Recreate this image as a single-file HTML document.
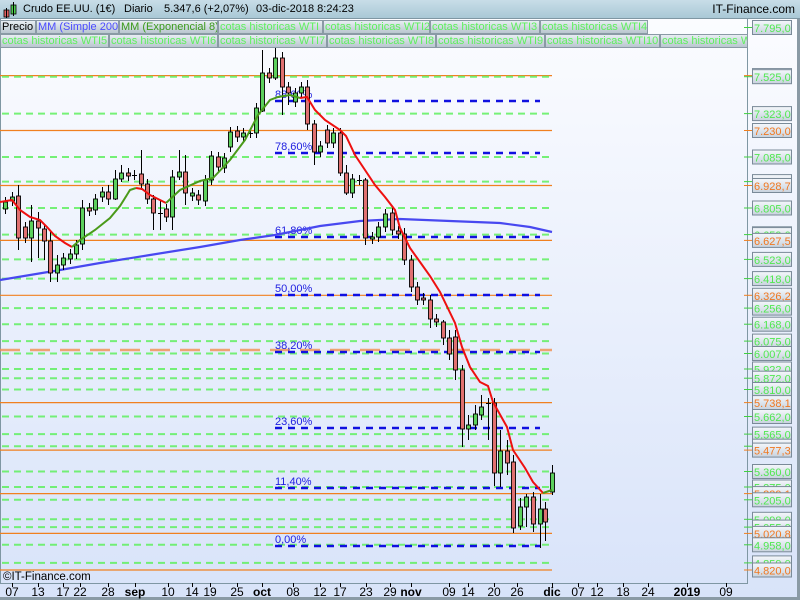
<!DOCTYPE html>
<html><head><meta charset="utf-8"><style>
*{margin:0;padding:0;box-sizing:border-box}
body{width:800px;height:600px;overflow:hidden;background:#dfe8f8;font-family:"Liberation Sans",sans-serif;position:relative}
#top{position:absolute;left:0;top:0;width:800px;height:19px;background:linear-gradient(#c8dde8,#a9c8d6);border-bottom:1px solid #7f97a3;font-size:11px;line-height:19px}
.lg{position:absolute;height:14px;font-size:11px;line-height:13px;border:1px solid #8a9aa5;background:linear-gradient(#e8eef2,#b9c6cf);color:#5ef05e;white-space:nowrap;overflow:hidden;padding:0 1px}
svg{position:absolute;left:0;top:0}
</style></head><body>
<div id="top">
<svg width="16" height="19" style="left:2px;top:0"><rect x="2" y="10" width="5" height="7" fill="#e06060" stroke="#000" stroke-width="0.8"/><line x1="4.5" y1="8" x2="4.5" y2="18" stroke="#000"/><rect x="9" y="5" width="5" height="9" fill="#50d050" stroke="#000" stroke-width="0.8"/><line x1="11.5" y1="2" x2="11.5" y2="16" stroke="#000"/></svg>
<span style="position:absolute;left:23px;top:0">Crudo EE.UU. (1€)</span>
<span style="position:absolute;left:124px;top:0">Diario</span>
<span style="position:absolute;left:164px;top:0">5.347,6 (+2,07%)</span>
<span style="position:absolute;left:256px;top:0">03-dic-2018 8:24:23</span>
<span style="position:absolute;right:5px;top:0;font-size:12px">IT-Finance.com</span>
</div>
<div class="lg" style="left:0;top:20px;width:36px;color:#000">Precio</div>
<div class="lg" style="left:36px;top:20px;width:83px;color:#4a4aff">MM (Simple 200)</div>
<div class="lg" style="left:119px;top:20px;width:99px;color:#3a9a1a">MM (Exponencial 8)</div>
<div class="lg" style="left:218px;top:20px;width:105px">cotas historicas WTI</div>
<div class="lg" style="left:323px;top:20px;width:107px">cotas historicas WTI2</div>
<div class="lg" style="left:430px;top:20px;width:110px">cotas historicas WTI3</div>
<div class="lg" style="left:540px;top:20px;width:108px">cotas historicas WTI4</div>
<div class="lg" style="left:0;top:34px;width:109px">cotas historicas WTI5</div>
<div class="lg" style="left:109px;top:34px;width:109px">cotas historicas WTI6</div>
<div class="lg" style="left:218px;top:34px;width:109px">cotas historicas WTI7</div>
<div class="lg" style="left:327px;top:34px;width:109px">cotas historicas WTI8</div>
<div class="lg" style="left:436px;top:34px;width:109px">cotas historicas WTI9</div>
<div class="lg" style="left:545px;top:34px;width:115px">cotas historicas WTI10</div>
<div class="lg" style="left:660px;top:34px;width:88px">cotas historicas WTI11</div>
<svg id="c" width="800" height="600" style="z-index:-1"></svg>
<script>
var s='';
s+='<defs><linearGradient id="bg" x1="0" y1="0" x2="0" y2="1"><stop offset="0" stop-color="#fbfcff"/><stop offset="1" stop-color="#d8e3f9"/></linearGradient><linearGradient id="lb" x1="0" y1="0" x2="0" y2="1"><stop offset="0" stop-color="#f4f7fb"/><stop offset="1" stop-color="#c8d2de"/></linearGradient></defs>';
s+='<rect x="0" y="19" width="800" height="581" fill="url(#bg)"/>';
s+='<line x1="0.5" y1="19" x2="0.5" y2="583" stroke="#7f97a3"/>';
s+='<line x1="747.5" y1="19" x2="747.5" y2="583" stroke="#7f97a3"/>';
s+='<line x1="0" y1="583.5" x2="748" y2="583.5" stroke="#7f97a3"/>';
s+='<rect x="797" y="19" width="3" height="581" fill="#8a9aa5"/><rect x="0" y="597" width="800" height="3" fill="#8a9aa5"/>';
function Y(p){return 27.5+(7795-p)*0.18235;}
var G=[7795,7525,7323,7085,6950,6805,6659,6523,6418,6256,6168,6075,6007,5922,5872,5810,5662,5565,5499,5360,5275,5205,5098,5055,4958,4859];
var O=[7531.2,7230,6928.7,6627.5,6326.2,6007,5738.1,5477.3,5239.1,5020.8,4820];
O.forEach(function(p){var y=Y(p).toFixed(1);
 if(p==6007) s+='<line x1="0" y1="350" x2="552" y2="350" stroke="#f09050" stroke-width="2.5" stroke-dasharray="20,10" opacity="0.8"/>';
 else s+='<line x1="0" y1="'+y+'" x2="552" y2="'+y+'" stroke="#f08020" stroke-width="1.2"/>';
 s+='<line x1="744" y1="'+y+'" x2="752" y2="'+y+'" stroke="#f08020"/>';});
G.forEach(function(p){var y=Y(p).toFixed(1);
 if(p!=7795) s+='<line x1="2" y1="'+y+'" x2="552" y2="'+y+'" stroke="#60f060" stroke-width="2" stroke-dasharray="7,5" opacity="0.85"/>';
 s+='<line x1="744" y1="'+y+'" x2="752" y2="'+y+'" stroke="#40d040"/>';});
var F=[[101,'88,60%'],[153,'78,60%'],[237,'61,80%'],[295,'50,00%'],[352,'38,20%'],[428,'23,60%'],[488,'11,40%'],[546,'0,00%']];
F.forEach(function(f){s+='<line x1="275" y1="'+f[0]+'" x2="540" y2="'+f[0]+'" stroke="#1010e0" stroke-width="2.5" stroke-dasharray="7,6"/><text x="275" y="'+(f[0]-3)+'" font-size="11" fill="#2020e0" font-family="Liberation Sans">'+f[1]+'</text>';});
s+='<polyline fill="none" stroke="#4848f0" stroke-width="2.2" points="0,280 60,270 100,263 150,255 200,247 240,240 275,235 320,226 360,221 400,219 450,221 500,223 530,227 552,232"/>';
var C=[[5,202,209,'g'],[12,197,201,'g'],[18,196,238,'r'],[25,227,238,'r'],[31,221,238,'g'],[38,221,228,'r'],[44,229,241,'r'],[50,241,273,'r'],[57,265,273,'g'],[63,258,265,'g'],[70,254,259,'g'],[76,245,254,'g'],[82,208,244,'g'],[89,208,211,'r'],[95,199,210,'g'],[102,192,197,'g'],[108,192,199,'r'],[115,179,199,'g'],[121,173,179,'g'],[128,173,176,'r'],[134,175,175,'r'],[141,174,184,'r'],[147,184,199,'r'],[153,199,213,'r'],[160,213,213,'r'],[166,209,217,'r'],[172,177,217,'g'],[179,172,177,'g'],[185,172,193,'r'],[192,193,196,'g'],[198,195,200,'r'],[205,180,201,'g'],[211,156,180,'g'],[218,157,167,'r'],[224,158,168,'g'],[230,132,147,'g'],[237,131,137,'r'],[243,133,137,'g'],[250,133,133,'g'],[256,108,133,'g'],[262,73,111,'g'],[269,73,78,'r'],[275,58,78,'g'],[282,58,87,'r'],[288,87,93,'r'],[295,93,102,'g'],[301,87,93,'g'],[307,87,124,'r'],[314,124,152,'r'],[320,146,152,'g'],[327,130,143,'r'],[333,133,143,'g'],[340,133,173,'r'],[346,173,193,'r'],[352,179,193,'g'],[359,180,180,'r'],[365,180,238,'r'],[372,237,239,'g'],[378,227,237,'g'],[385,214,227,'g'],[392,213,230,'r'],[398,231,234,'r'],[404,234,260,'r'],[411,260,287,'r'],[417,287,300,'r'],[423,298,300,'r'],[430,300,319,'r'],[436,319,322,'r'],[443,322,338,'r'],[449,338,354,'r'],[455,337,370,'r'],[462,370,429,'r'],[468,425,429,'g'],[475,414,425,'g'],[481,407,415,'g'],[488,403,403,'r'],[494,403,473,'r'],[500,451,473,'g'],[507,451,463,'r'],[513,462,528,'r'],[520,507,526,'g'],[526,497,507,'g'],[533,497,524,'r'],[540,509,524,'g'],[545,509,522,'r'],[552,473,492,'g']];
var W={18:[185,250],50:[230,282],57:[255,282],44:[225,260],31:[205,262],38:[212,258],82:[200,250],108:[185,205],115:[170,200],121:[165,182],141:[150,190],153:[195,230],160:[200,230],172:[170,230],179:[150,180],185:[155,205],262:[50,112],275:[45,80],282:[52,115],288:[82,105],307:[80,130],314:[120,165],340:[128,176],346:[165,195],365:[178,245],404:[228,265],430:[295,328],455:[330,380],462:[365,447],468:[415,440],475:[405,430],481:[395,420],488:[398,440],494:[398,486],500:[430,487],507:[440,475],513:[455,533],520:[498,530],526:[494,527],533:[492,532],540:[494,548],545:[502,541],552:[465,495],449:[330,360],443:[320,345]};
C.forEach(function(c){var x=c[0],t=c[1],b=c[2],w=W[x]||[t-5,b+5];
 s+='<line x1="'+(x+0.5)+'" y1="'+w[0]+'" x2="'+(x+0.5)+'" y2="'+w[1]+'" stroke="#000"/>';
 var h=Math.max(b-t,1);
 if(b-t<2) s+='<line x1="'+(x-2)+'" y1="'+t+'.5" x2="'+(x+3)+'" y2="'+t+'.5" stroke="#000"/>';
 else s+='<rect x="'+(x-1.5)+'" y="'+t+'" width="4" height="'+h+'" fill="'+(c[3]=='g'?'#5cd05c':'#e07070')+'" stroke="#000" stroke-width="0.9"/>';});
s+='<polyline fill="none" stroke="#ee1010" stroke-width="2" points="0,202 12,200 20,210 30,217 40,220 47,227 55,236 65,243 72,247"/>';
s+='<polyline fill="none" stroke="#4a9a1a" stroke-width="2" points="72,247 80,240 95,230 110,218 120,206 130,190 136,188"/>';
s+='<polyline fill="none" stroke="#ee1010" stroke-width="2" points="136,188 142,189 150,195 160,200 166,203"/>';
s+='<polyline fill="none" stroke="#4a9a1a" stroke-width="2" points="166,203 180,190 200,181 213,178 230,160 245,140 258,115 270,100 278,97 290,95 300,98"/>';
s+='<polyline fill="none" stroke="#ee1010" stroke-width="2" points="300,98 307,97 315,110 325,120 340,130 346,136 355,155 365,170 375,185 385,197 395,210 400,228 410,248 420,262 430,276 440,292 455,323 462,347 470,367 480,382 488,386 493,402 507,427 513,450 525,468 533,482 543,493"/>';
s+='<polyline fill="none" stroke="#4a9a1a" stroke-width="2" points="543,493 552,490"/>';
var L=[[7795,'7.795,0','g'],[7531.2,'7.531,2','o'],[7525,'7.525,0','g'],[7323,'7.323,0','g'],[7230,'7.230,0','o'],[7085,'7.085,0','g'],[6950,'6.950,0','g'],[6928.7,'6.928,7','o'],[6805,'6.805,0','g'],[6663.4,'6.663,4','b'],[6659,'6.659,0','g'],[6627.5,'6.627,5','o'],[6523,'6.523,0','g'],[6418,'6.418,0','g'],[6326.2,'6.326,2','o'],[6256,'6.256,0','g'],[6168,'6.168,0','g'],[6075,'6.075,0','g'],[6007,'6.007,0','g'],[5922,'5.922,0','g'],[5872,'5.872,0','g'],[5810,'5.810,0','g'],[5738.1,'5.738,1','o'],[5662,'5.662,0','g'],[5565,'5.565,0','g'],[5499,'5.499,0','g'],[5477.3,'5.477,3','o'],[5360,'5.360,0','g'],[5275,'5.275,0','g'],[5239.1,'5.239,1','o'],[5205,'5.205,0','g'],[5098,'5.098,0','g'],[5055,'5.055,0','g'],[5020.8,'5.020,8','o'],[4958,'4.958,0','g'],[4859,'4.859,0','g'],[4820,'4.820,0','o']];
var col={g:'#50e850',o:'#f07820',b:'#2020e0'};
L.forEach(function(l){var y=Y(l[0]);
 s+='<rect x="752.5" y="'+(y-7).toFixed(1)+'" width="39" height="14" fill="url(#lb)" stroke="#7a8a98"/><text x="754" y="'+(y+4.5).toFixed(1)+'" font-size="11" fill="'+col[l[2]]+'" font-family="Liberation Sans">'+l[1]+'</text>';});
s+='<text x="3" y="580" font-size="11.5" fill="#000" font-family="Liberation Sans">©IT-Finance.com</text>';
var X=[[12,'07'],[38,'13'],[63,'17'],[80,'22'],[108,'28'],[135,'sep',1],[168,'10'],[192,'14'],[210,'19'],[237,'25'],[262,'oct',1],[293,'08'],[320,'12'],[340,'17'],[366,'23'],[390,'29'],[411,'nov',1],[449,'09'],[468,'14'],[494,'20'],[517,'26'],[552,'dic',1],[578,'07'],[597,'12'],[623,'18'],[648,'24'],[687,'2019',1],[726,'09']];
X.forEach(function(t){s+='<line x1="'+(t[0]+0.5)+'" y1="583" x2="'+(t[0]+0.5)+'" y2="587" stroke="#000"/><text x="'+t[0]+'" y="596" text-anchor="middle" font-size="12" '+(t[2]?'font-weight="bold" ':'')+'fill="#000" font-family="Liberation Sans">'+t[1]+'</text>';});
document.getElementById('c').innerHTML=s;
</script>
</body></html>
